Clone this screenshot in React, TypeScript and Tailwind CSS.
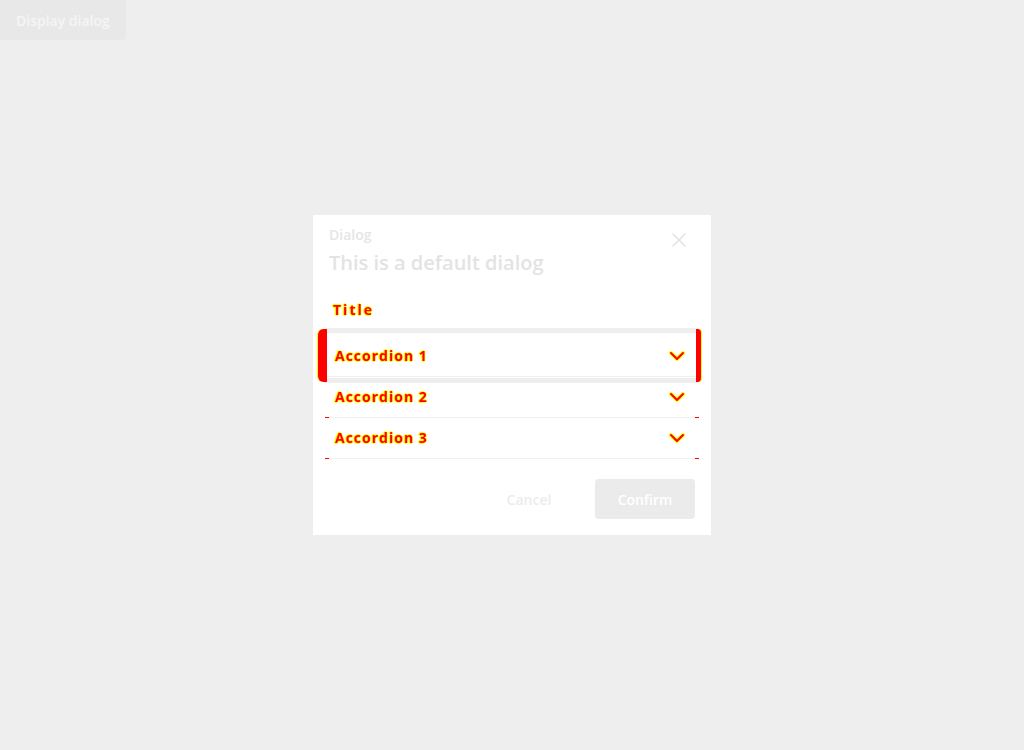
import React from "react";

const glitch =
  "text-[#ff0000] [text-shadow:1px_0_#ffff00,-1px_0_#ffff00,0_1px_#ffff00,0_-1px_#ffff00]";

function Chevron() {
  return (
    <svg width="16" height="10" viewBox="0 0 16 10" className="shrink-0">
      <polyline points="2,2 8,8 14,2" fill="none" stroke="#ffff00" strokeWidth="4" strokeLinecap="round" strokeLinejoin="round" />
      <polyline points="2,2 8,8 14,2" fill="none" stroke="#ff0000" strokeWidth="2" strokeLinecap="round" strokeLinejoin="round" />
    </svg>
  );
}

function Item({ label, first }: { label: string; first?: boolean }) {
  return (
    <div className="relative border-b border-[#f0f0f0]">
      {first && (
        <>
          <div className="pointer-events-none absolute left-0 right-0 top-[-8px] bottom-[-7px] border-y-[5px] border-[#eeeeee]" />
          <div className="pointer-events-none absolute left-[-8px] w-[10px] top-[-7px] bottom-[-6px] rounded-l-[6px] bg-[#ff0000] border-l border-[#ffff00]" />
          <div className="pointer-events-none absolute right-[-3px] w-[6px] top-[-7px] bottom-[-6px] rounded-r-[4px] bg-[#ff0000] border-r border-[#ffff00]" />
        </>
      )}
      {!first && (
        <>
          <div className="absolute left-0 bottom-[-1px] h-[1px] w-[4px] bg-[#ff0000]" />
          <div className="absolute right-0 bottom-[-1px] h-[1px] w-[4px] bg-[#ff0000]" />
        </>
      )}
      <div className="flex h-[40px] items-center justify-between pl-[10px] pr-[14px]">
        <span className={`text-[14px] font-bold leading-5 tracking-[1px] ${glitch}`}>{label}</span>
        <Chevron />
      </div>
    </div>
  );
}

export default function App() {
  return (
    <div className="flex h-[750px] w-[1024px] flex-col bg-[#eeeeee] font-['Open_Sans',sans-serif]">
      <div className="flex">
        <button className="h-10 rounded-br-sm bg-[#e8e8e8] px-4 text-[14px] font-semibold text-[#f5f5f5]">
          Display dialog
        </button>
      </div>
      <div className="flex flex-1 items-center justify-center pb-10">
        <div className="flex w-[398px] flex-col bg-white px-4 pt-[10px] pb-4">
          <div className="flex items-start justify-between">
            <div className="flex flex-col">
              <div className="text-[14px] font-semibold leading-5 text-[#e6e6e6]">Dialog</div>
              <div className="mt-[3px] text-[20px] font-semibold leading-[30px] text-[#e3e3e3]">This is a default dialog</div>
            </div>
            <svg
              className="mr-1 mt-[3px]"
              width="24"
              height="24"
              viewBox="0 0 24 24"
              fill="none"
              stroke="#e2e2e2"
              strokeWidth="1.5"
              strokeLinecap="round"
            >
              <path d="M18 6 6 18M6 6l12 12" />
            </svg>
          </div>
          <div className={`mt-[22px] pl-1 text-[14px] font-bold leading-5 tracking-[2px] ${glitch}`}>Title</div>
          <div className="mx-[-4px] mt-4">
            <Item label="Accordion 1" first />
            <Item label="Accordion 2" />
            <Item label="Accordion 3" />
          </div>
          <div className="mt-5 flex justify-end gap-4">
            <button className="h-10 w-[100px] text-[14px] font-semibold text-[#ececec]">Cancel</button>
            <button className="h-10 w-[100px] rounded-sm bg-[#ebebeb] text-[14px] font-semibold text-white">
              Confirm
            </button>
          </div>
        </div>
      </div>
    </div>
  );
}
